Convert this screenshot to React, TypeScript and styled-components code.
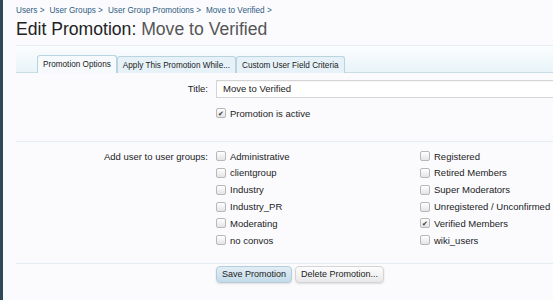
import React from "react";
import styled, { createGlobalStyle } from "styled-components";

const GlobalStyle = createGlobalStyle`
  html, body {
    margin: 0;
    padding: 0;
    background: #fbfbfe;
    font-family: "Liberation Sans", Arial, sans-serif;
    color: #222;
  }
`;

const Page = styled.div`
  display: flex;
  width: 553px;
  height: 300px;
  overflow: hidden;
`;

const Rail = styled.div`
  width: 3px;
  flex: none;
  background: #2f4853;
`;

const Main = styled.div`
  flex: 1;
  padding-left: 13px;
  min-width: 0;
`;

const Crumbs = styled.div`
  display: flex;
  gap: 5px;
  padding-top: 6px;
  font-size: 8.2px;
  color: #2f5c80;
  white-space: nowrap;
`;

const Heading = styled.h1`
  margin: 3px 0 0;
  font-size: 17.6px;
  font-weight: normal;
  color: #222;
  line-height: 23px;

  span {
    color: #555;
  }
`;

const TabBar = styled.div`
  margin-top: 4px;
  border-top: 1px solid #e6eef2;
  height: 26px;
  padding-left: 21px;
  display: flex;
  align-items: flex-end;
  background: linear-gradient(#fbfdfe, #e9f4f9);
  border-bottom: 1px solid #c9dde6;
`;

const Tab = styled.div<{ $active?: boolean }>`
  height: 16px;
  padding: 0 5px;
  display: flex;
  align-items: center;
  font-size: 8.2px;
  color: #222;
  border: 1px solid #b9d3df;
  border-bottom: none;
  border-radius: 3px 3px 0 0;
  margin-bottom: -1px;
  background: ${(p) => (p.$active ? "#f6fafc" : "#e6f2f8")};
  ${(p) => (p.$active ? "height: 17px;" : "")}
`;

const Row = styled.div<{ $top?: number }>`
  display: grid;
  grid-template-columns: 192px 1fr;
  column-gap: 8px;
  align-items: start;
  padding-top: ${(p) => p.$top ?? 0}px;
`;

const Label = styled.div`
  text-align: right;
  font-size: 9.5px;
  color: #222;
  line-height: 17px;
`;

const Input = styled.div`
  height: 16px;
  border: 1px solid #d4d4d4;
  border-right: none;
  background: #fff;
  padding-left: 6px;
  font-size: 9.5px;
  line-height: 16px;
  box-shadow: inset 0 1px 1px rgba(0, 0, 0, 0.04);
`;

const Check = styled.label`
  display: flex;
  align-items: center;
  gap: 4px;
  font-size: 9.5px;
  color: #222;
  height: 16.8px;
  white-space: nowrap;
`;

const Box = styled.span`
  width: 8px;
  height: 8px;
  flex: none;
  border: 1px solid #b8b8b8;
  border-radius: 2px;
  background: linear-gradient(#ffffff, #e4e4e4);
  display: flex;
  align-items: center;
  justify-content: center;
  font-size: 7px;
  line-height: 1;
  color: #333;
`;

const Divider = styled.div<{ $top: number }>`
  margin-top: ${(p) => p.$top}px;
  height: 1px;
  background: #e3eef2;
`;

const Groups = styled.div`
  display: grid;
  grid-template-columns: 204px 1fr;
`;

const Col = styled.div`
  display: flex;
  flex-direction: column;
`;

const Buttons = styled.div`
  display: flex;
  gap: 3px;
  padding: 2px 0 0 200px;
`;

const Button = styled.button<{ $primary?: boolean }>`
  height: 17px;
  padding: 0 5px;
  font-family: "Liberation Sans", Arial, sans-serif;
  font-size: 9px;
  color: #222;
  border: 1px solid ${(p) => (p.$primary ? "#b5cddb" : "#d4d4d4")};
  border-radius: 4px;
  background: ${(p) =>
    p.$primary
      ? "linear-gradient(#e2eef6, #c4dbe9)"
      : "linear-gradient(#fdfdfd, #e8e8ea)"};
  box-shadow: 0 1px 2px rgba(0, 0, 0, 0.12);
`;

const CheckItem = ({ text, on }: { text: string; on?: boolean }) => (
  <Check>
    <Box>{on ? "✔" : ""}</Box>
    {text}
  </Check>
);

const left = ["Administrative", "clientgroup", "Industry", "Industry_PR", "Moderating", "no convos"];
const right = [
  "Registered",
  "Retired Members",
  "Super Moderators",
  "Unregistered / Unconfirmed",
  "Verified Members",
  "wiki_users",
];

export default function App() {
  return (
    <Page>
      <GlobalStyle />
      <Rail />
      <Main>
        <Crumbs>
          <span>Users &gt;</span>
          <span>User Groups &gt;</span>
          <span>User Group Promotions &gt;</span>
          <span>Move to Verified &gt;</span>
        </Crumbs>
        <Heading>
          Edit Promotion: <span>Move to Verified</span>
        </Heading>
        <TabBar>
          <Tab $active>Promotion Options</Tab>
          <Tab>Apply This Promotion While...</Tab>
          <Tab>Custom User Field Criteria</Tab>
        </TabBar>
        <Row $top={7}>
          <Label>Title:</Label>
          <Input>Move to Verified</Input>
        </Row>
        <Row $top={7}>
          <div />
          <CheckItem text="Promotion is active" on />
        </Row>
        <Divider $top={19} />
        <Row $top={6}>
          <Label>Add user to user groups:</Label>
          <Groups>
            <Col>
              {left.map((g) => (
                <CheckItem key={g} text={g} />
              ))}
            </Col>
            <Col>
              {right.map((g) => (
                <CheckItem key={g} text={g} on={g === "Verified Members"} />
              ))}
            </Col>
          </Groups>
        </Row>
        <Divider $top={14} />
        <Buttons>
          <Button $primary>Save Promotion</Button>
          <Button>Delete Promotion...</Button>
        </Buttons>
      </Main>
    </Page>
  );
}
